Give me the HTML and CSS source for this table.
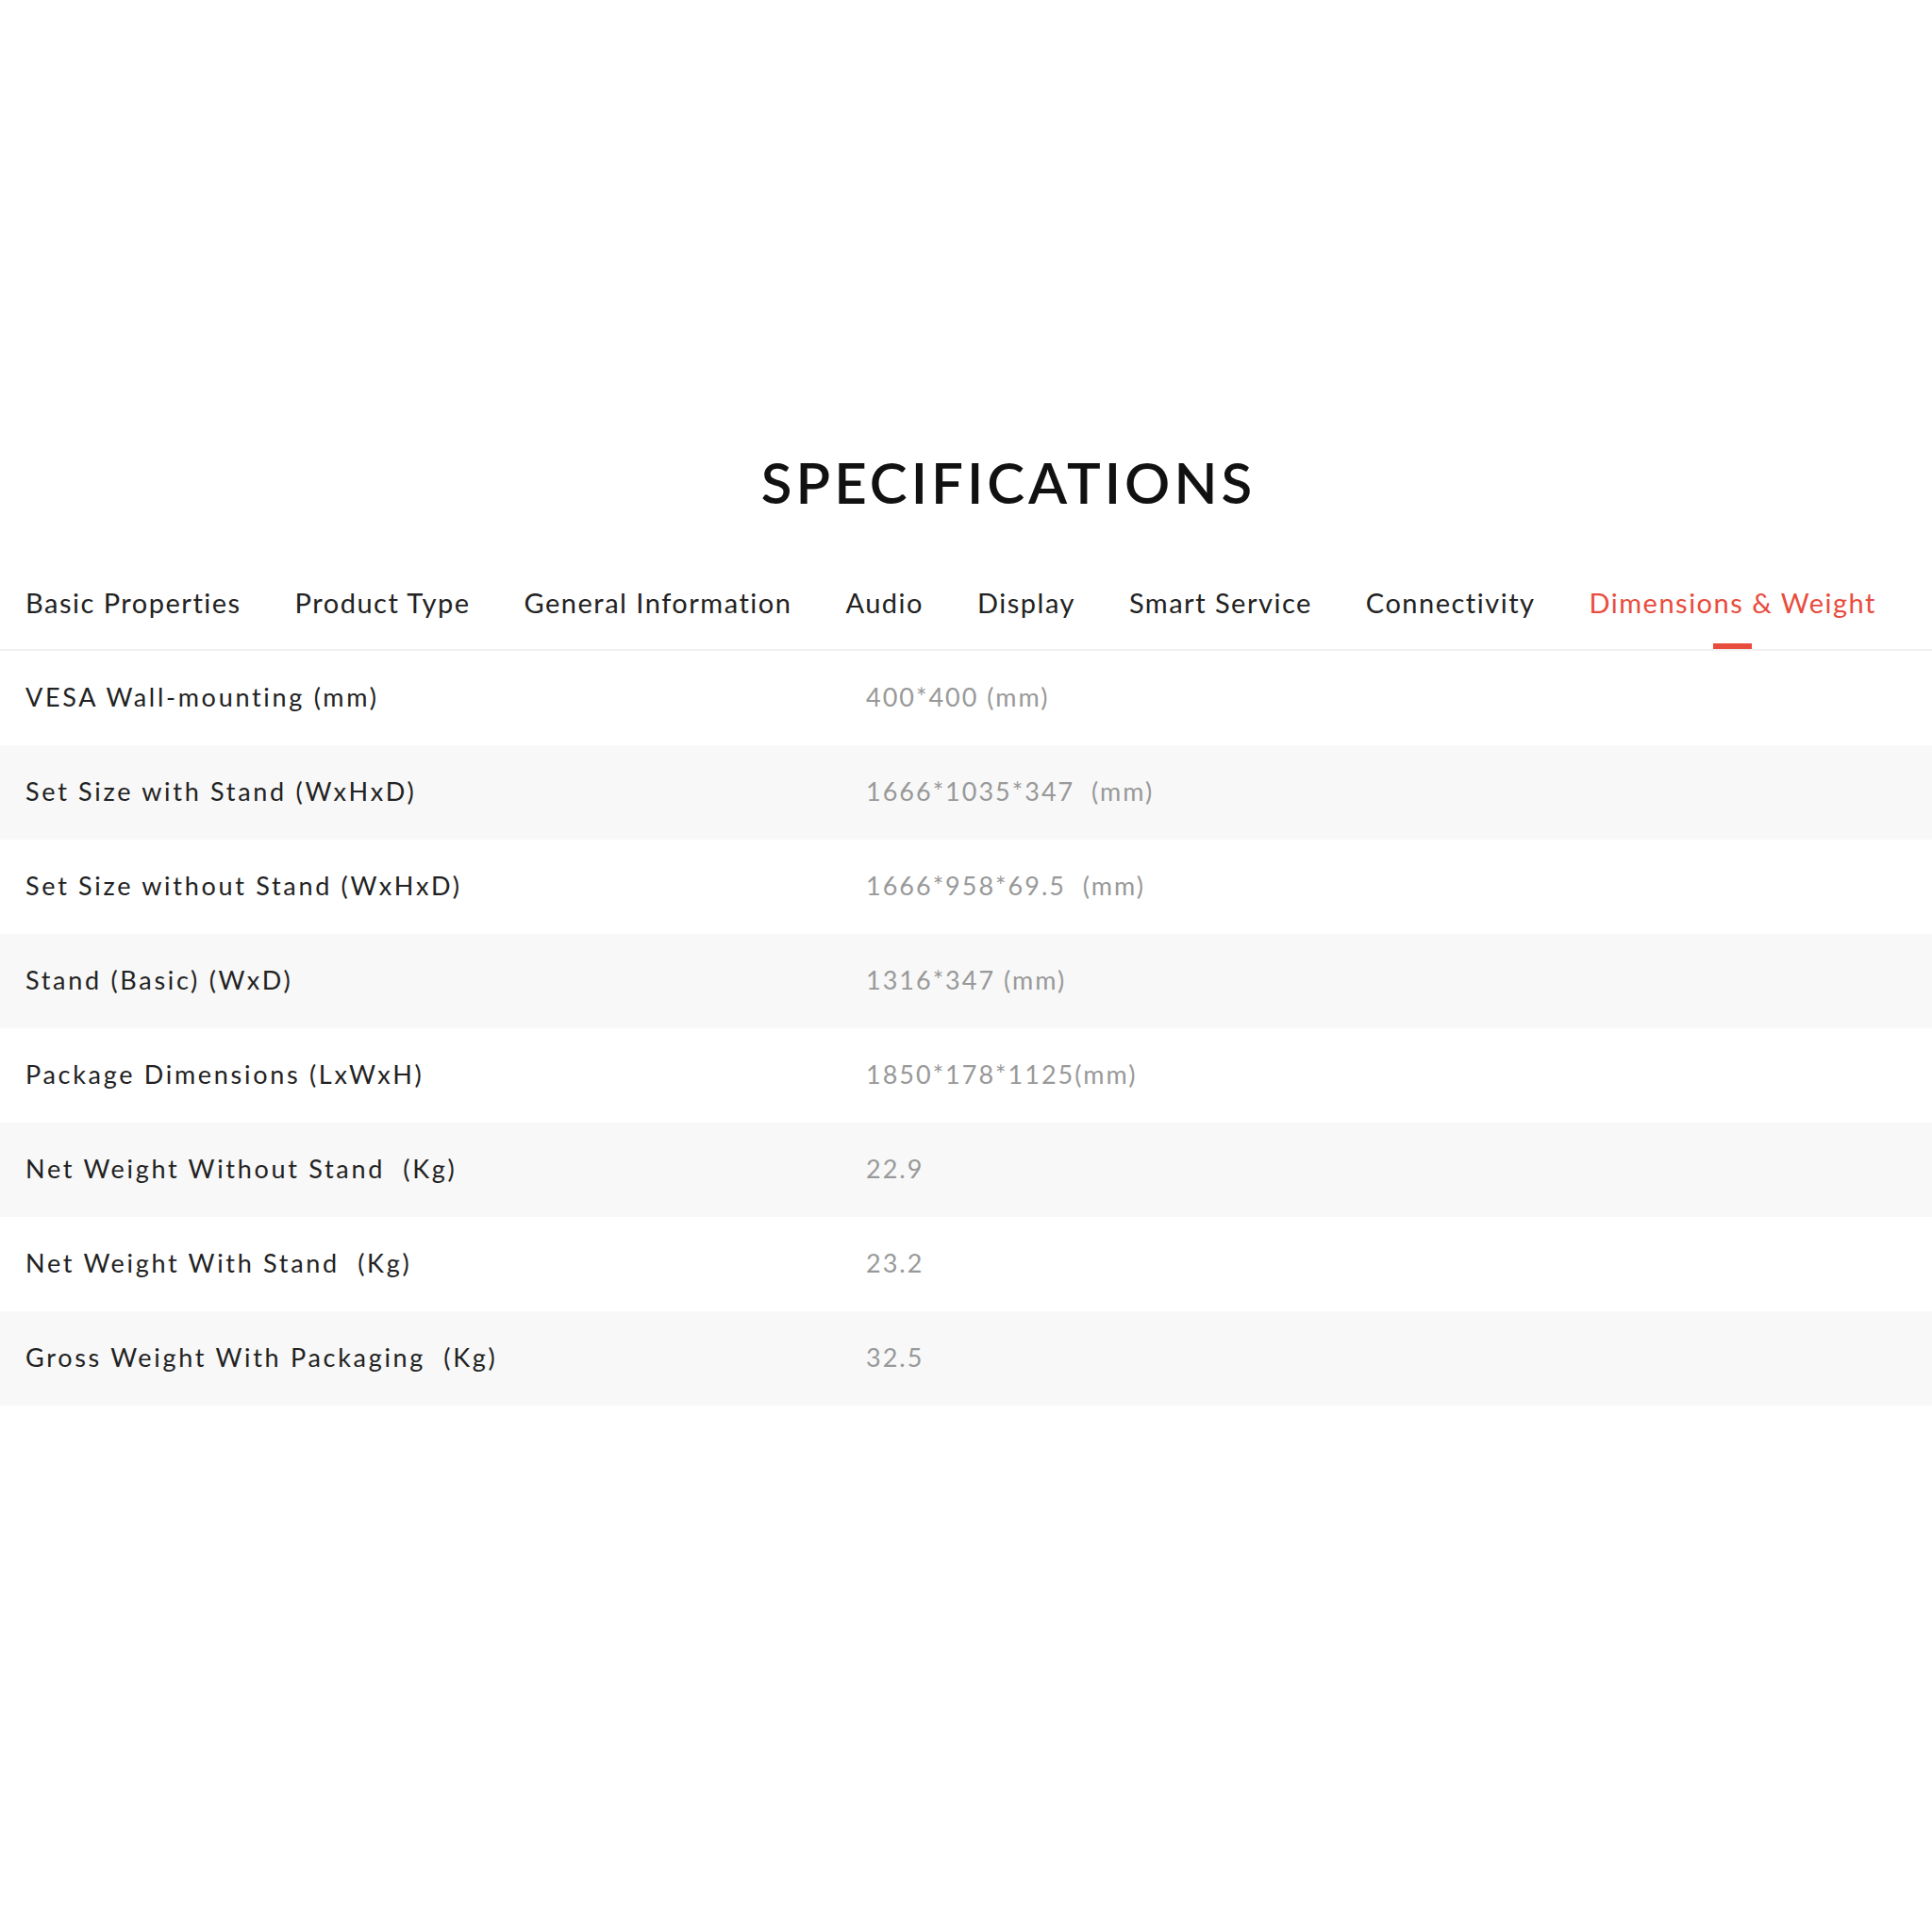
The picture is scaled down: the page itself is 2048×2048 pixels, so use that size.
FILE: index.html
```html
<!DOCTYPE html>
<html lang="en">
<head>
<meta charset="utf-8">
<title>Specifications</title>
<link rel="stylesheet" href="styles.css">
</head>
<body>
<section class="specs">
  <h2 class="specs-title">SPECIFICATIONS</h2>
  <nav class="tabs">
    <span class="tab">Basic Properties</span>
    <span class="tab">Product Type</span>
    <span class="tab">General Information</span>
    <span class="tab">Audio</span>
    <span class="tab">Display</span>
    <span class="tab">Smart Service</span>
    <span class="tab">Connectivity</span>
    <span class="tab tab-active">Dimensions &amp; Weight</span>
  </nav>
  <div class="spec-table">
    <div class="spec-row"><div class="spec-label">VESA Wall-mounting (mm)</div><div class="spec-value">400*400 (mm)</div></div>
    <div class="spec-row"><div class="spec-label">Set Size with Stand (WxHxD)</div><div class="spec-value">1666*1035*347&nbsp;&nbsp;(mm)</div></div>
    <div class="spec-row"><div class="spec-label">Set Size without Stand (WxHxD)</div><div class="spec-value">1666*958*69.5&nbsp;&nbsp;(mm)</div></div>
    <div class="spec-row"><div class="spec-label">Stand (Basic) (WxD)</div><div class="spec-value">1316*347 (mm)</div></div>
    <div class="spec-row"><div class="spec-label">Package Dimensions (LxWxH)</div><div class="spec-value">1850*178*1125(mm)</div></div>
    <div class="spec-row"><div class="spec-label">Net Weight Without Stand&nbsp;&nbsp;(Kg)</div><div class="spec-value">22.9</div></div>
    <div class="spec-row"><div class="spec-label">Net Weight With Stand&nbsp;&nbsp;(Kg)</div><div class="spec-value">23.2</div></div>
    <div class="spec-row"><div class="spec-label">Gross Weight With Packaging&nbsp;&nbsp;(Kg)</div><div class="spec-value">32.5</div></div>
  </div>
</section>
</body>
</html>
```
FILE: styles.css
```css
html, body {
  margin: 0;
  padding: 0;
  background: #ffffff;
}

body {
  font-family: "Lato", "Open Sans", sans-serif;
  color: #222222;
}

.specs {
  padding-top: 475px;
}

.specs-title {
  margin: 0;
  text-align: center;
  font-size: 60px;
  line-height: 72px;
  font-weight: 600;
  letter-spacing: 4px;
  padding-left: 90px;
  color: #111111;
}

.tabs {
  margin-top: 72px;
  display: flex;
  gap: 57px;
  padding-left: 27px;
  border-bottom: 2px solid #f0f0f0;
}

.tab {
  position: relative;
  font-size: 29px;
  line-height: 40px;
  letter-spacing: 1.5px;
  padding-bottom: 29px;
  color: #222222;
  white-space: nowrap;
}

.tab-active {
  color: #e84c3d;
}

.tab-active::after {
  content: "";
  position: absolute;
  left: 50%;
  bottom: 0;
  width: 41px;
  height: 6px;
  margin-left: -21px;
  background: #e84c3d;
}

.spec-row {
  display: grid;
  grid-template-columns: 918px 1fr;
  height: 100px;
  align-items: center;
}

.spec-row:nth-child(even) {
  background: #f8f8f8;
}

.spec-label {
  padding-left: 27px;
  padding-bottom: 4px;
  font-size: 27px;
  letter-spacing: 2.7px;
  color: #222222;
}

.spec-value {
  padding-bottom: 4px;
  font-size: 27px;
  letter-spacing: 2px;
  color: #999999;
}
```
